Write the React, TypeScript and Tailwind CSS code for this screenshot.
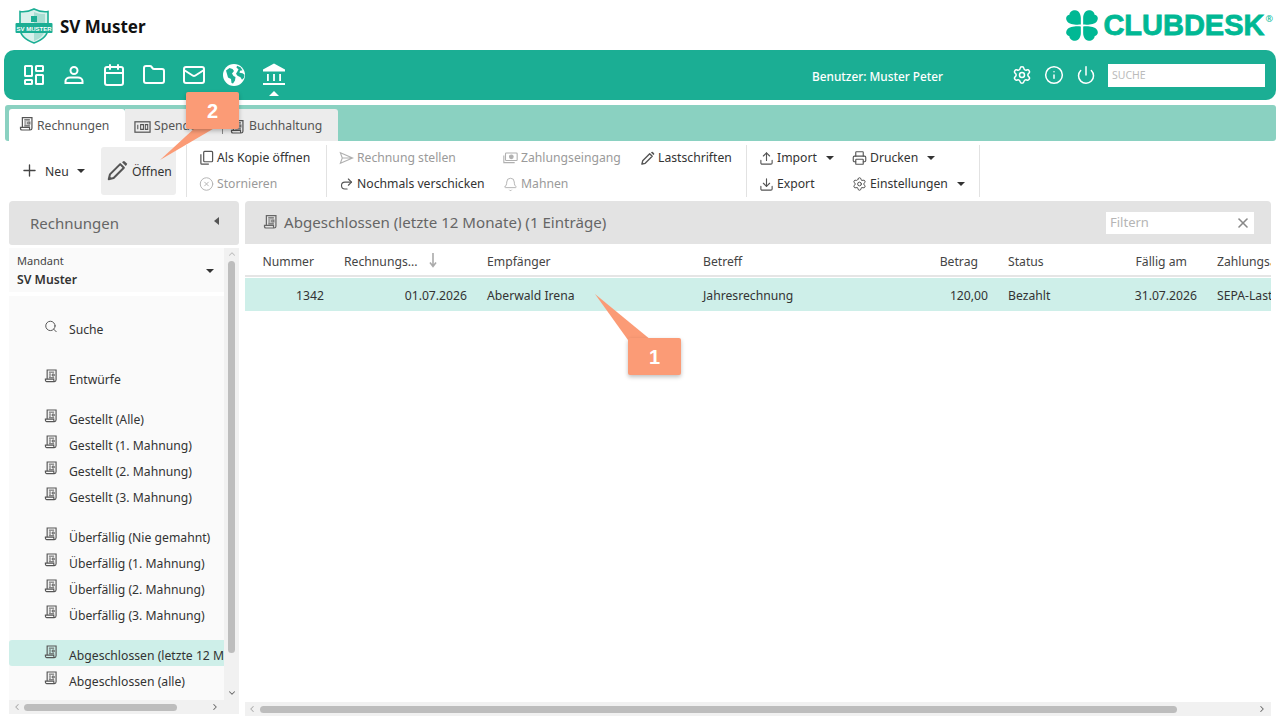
import React from 'react';
import {
  Calendar, Folder, Mail, Settings, Info, Power, Plus, CircleX, Redo2,
  Bell, Upload, Download, Printer, Search, X, ChevronUp, ChevronDown, ChevronLeft, ChevronRight,
} from 'lucide-react';

const InvoiceIcon = ({ className = 'w-4 h-4' }: { className?: string }) => (
  <svg viewBox="0 0 16 16" className={className} fill="none" stroke="currentColor" strokeWidth="1.300">
    <path d="M3.600 11.500V1.200h10.200v11.200a2 2 0 0 1-2 2H3a1.600 1.600 0 0 1-1.400-1.500v-1.400h9.600v1.400a1.500 1.500 0 0 0 1 1.500" />
    <path d="M5.600 3.600h6M5.600 5.800h2.400M9.400 5.800h2.200V8H9.400zM5.600 8h2.400M5.600 10h6" strokeWidth="1.100" />
  </svg>
);

const PencilIcon = ({ className = 'w-5 h-5' }: { className?: string }) => (
  <svg viewBox="0 0 24 24" className={className} fill="none" stroke="currentColor" strokeWidth="2.200" strokeLinejoin="round">
    <path d="M3 21l1.300-5.300L15.500 4.500l4 4L8.300 19.700z" />
    <path d="M17.500 2.500l1-1a1.500 1.500 0 0 1 2 0l2 2a1.500 1.500 0 0 1 0 2l-1 1z" fill="currentColor" stroke="none" />
    <path d="M3 21l.8-3.400 2.600 2.600z" fill="currentColor" stroke="none" />
  </svg>
);

const CopyIcon = () => (
  <svg viewBox="0 0 16 16" className="w-4 h-4" fill="none" stroke="currentColor" strokeWidth="1.300">
    <rect x="5" y="1" width="9.500" height="11" rx="1" />
    <path d="M2 4v9.500a1 1 0 0 0 1 1h7.500" />
  </svg>
);

const DashboardIcon = () => (
  <svg viewBox="0 0 24 24" className="w-6 h-6" fill="none" stroke="currentColor" strokeWidth="2">
    <rect x="3" y="3" width="7" height="10" rx="0.500" />
    <rect x="14" y="3" width="7" height="5" rx="0.500" />
    <rect x="14" y="12" width="7" height="9" rx="0.500" />
    <rect x="3" y="17" width="7" height="4" rx="0.500" />
  </svg>
);

const UserIcon = () => (
  <svg viewBox="0 0 24 24" className="w-6 h-6" fill="none" stroke="currentColor" strokeWidth="2">
    <circle cx="12" cy="7.500" r="3.500" />
    <path d="M8 14.500h8c2.500 0 4.500 1.500 4.500 3.500v2h-17v-2c0-2 2-3.500 4.500-3.500z" />
  </svg>
);

const GlobeIcon = () => (
  <svg viewBox="0 0 24 24" className="w-6 h-6">
    <circle cx="12" cy="12" r="11" fill="white" />
    <path d="M4 7.500l3.500-2.500 3 1 1.500 2-2 2.500 1.500 2.500 2 1-.5 3.500-2 3-1.500-.5-.5-4-3-1.500-1-3.500zM15 2.800l3.500 1.500 2 3-2.500.5-.5 2 3 .5 2 1.500-.5 3-2 2-1.500-2.500-3-1.500-1.500-2 1.500-2.500 1-2-2-1.500z" fill="#1bae94" />
  </svg>
);

const BankIcon = () => (
  <svg viewBox="0 0 24 24" className="w-[24px] h-[24px]" fill="white">
    <path d="M12 0.500 23 6.500V8.500H1V6.500z" />
    <path d="M5 11h1.800v7H5zM11.100 11h1.800v7h-1.800zM17.200 11H19v7h-1.800z" />
    <path d="M1 20h22v2H1z" />
  </svg>
);

const CloverLogo = () => (
  <svg viewBox="0 0 34 32" className="w-[34px] h-[31px]" fill="#00b894">
    {[0, 1, 2, 3].map((i) => (
      <path
        key={i}
        transform={`translate(${i === 1 || i === 3 ? 34 : 0} ${i >= 2 ? 32 : 0}) scale(${i === 1 || i === 3 ? -1 : 1} ${i >= 2 ? -1 : 1})`}
        d="M15.800 15C10 15.400 4 15 1.600 11.500-.4 8.500 1 5.500 4 5c0-2.800 3-5 6-4.800 3.800.3 5.800 4 5.800 8z"
      />
    ))}
  </svg>
);

const ShieldLogo = () => (
  <svg viewBox="0 0 38 36" className="w-[38px] h-[36px]">
    <path d="M19 1C14 3.500 9 4 5 3.500V20c0 8 7 12.500 14 15 7-2.500 14-7 14-15V3.500C29 4 24 3.500 19 1z" fill="#d9f1ec" stroke="#1bae94" strokeWidth="1.600" />
    <path d="M19 4v29c6-2.500 11-6 11-13V6c-4 .2-8-.6-11-2z" fill="#a9ded3" />
    <path d="M16 8h6v6h-6z" fill="#1bae94" />
    <rect x="0.500" y="15" width="37" height="10" rx="1" fill="#1bae94" />
    <text x="19" y="22.500" textAnchor="middle" fontSize="6" fontWeight="700" fill="white" fontFamily="'Liberation Sans', sans-serif">SV MUSTER</text>
  </svg>
);

const SendIcon = () => (
  <svg viewBox="0 0 16 16" className="w-4 h-4" fill="none" stroke="currentColor" strokeWidth="1.200">
    <path d="M1.500 2.500 14.500 8 1.500 13.500 3.500 8zM3.500 8h11" />
  </svg>
);

const CashIcon = () => (
  <svg viewBox="0 0 18 16" className="w-[18px] h-4" fill="none" stroke="currentColor" strokeWidth="1.300">
    <rect x="3" y="2" width="14" height="9" rx="1" />
    <circle cx="10" cy="6.500" r="2.200" fill="currentColor" />
    <path d="M1 5v8.500h13" />
  </svg>
);

const DonationIcon = () => (
  <svg viewBox="0 0 18 14" className="w-[17px] h-[14px]" fill="none" stroke="currentColor" strokeWidth="1.300">
    <rect x="1" y="1.500" width="16" height="11" />
    <path d="M4 4.500v5M7 4.500h3v5H7zM12 4.500h2.500v5H12z" strokeWidth="1.100" />
  </svg>
);

const Caret = ({ className = '' }: { className?: string }) => (
  <span className={`inline-block w-0 h-0 border-l-[4px] border-r-[4px] border-t-[4px] border-l-transparent border-r-transparent border-t-[#333] ${className}`} />
);

const ToolItem = ({ icon, label, off, caret }: { icon: React.ReactNode; label: string; off?: boolean; caret?: boolean }) => (
  <div className={`h-[26px] flex items-center gap-[3px] whitespace-nowrap ${off ? 'text-[#9a9a9a]' : 'text-[#333]'}`}>
    <span className={`w-[15px] flex justify-center shrink-0 ${off ? 'text-[#b0b0b0]' : 'text-[#555]'}`}>{icon}</span>
    <span>{label}</span>
    {caret && <Caret className="ml-[6px]" />}
  </div>
);

const Divider = () => <div className="w-px h-[52px] bg-[#e2e2e2] shrink-0" />;

const SideItem = ({ label, active, mt = '', icon }: { label: string; active?: boolean; mt?: string; icon?: React.ReactNode }) => (
  <div className={`h-[26px] flex items-center pl-[35px] whitespace-nowrap rounded-l-[3px] ${mt} ${active ? 'bg-[#ceefe9]' : ''}`}>
    <span className="w-[14px] mr-[11px] flex justify-center text-[#555] shrink-0 -mt-[2px]">{icon ?? <InvoiceIcon className="w-[15px] h-[16px]" />}</span>
    <span className="text-[#333] mt-[7px]">{label}</span>
  </div>
);

const cols = 'grid grid-cols-[89px_143px_216px_212px_93px_128px_81px_100px]';

export default function App() {
  return (
    <div className="relative w-[1280px] h-[720px] overflow-hidden bg-white font-['Noto_Sans','Open_Sans',sans-serif] text-[12.2px] text-[#333]">
      {/* header */}
      <div className="h-[50px] flex items-center justify-between pl-[15px] pr-[7px]">
        <div className="flex items-center gap-[7px] mt-[2px]">
          <ShieldLogo />
          <span className="text-[17px] font-bold text-[#111] mt-[1px]">SV Muster</span>
        </div>
        <div className="flex items-center gap-[4px] mt-[1px]">
          <CloverLogo />
          <span className="font-['Liberation_Sans',sans-serif] font-bold text-[29px] leading-none text-[#00b894] [-webkit-text-stroke:0.8px_#00b894]">CLUBDESK</span>
          <span className="text-[9px] leading-none text-[#00b894] -ml-[3px] -mt-[14px]">®</span>
        </div>
      </div>

      {/* main nav */}
      <div className="relative mx-[4px] h-[50px] rounded-[10px] bg-[#1bae94] flex items-center text-white">
        <div className="flex items-center gap-[16px] pl-[18px]">
          <DashboardIcon />
          <UserIcon />
          <Calendar className="w-6 h-6" strokeWidth={2} />
          <Folder className="w-6 h-6" strokeWidth={2} />
          <Mail className="w-6 h-6" strokeWidth={2} />
          <GlobeIcon />
          <BankIcon />
        </div>
        <span className="ml-[526px] w-[200px] pt-[3px] text-[11.8px] font-medium">Benutzer: Muster Peter</span>
        <div className="flex items-center gap-[12px]">
          <Settings className="w-5 h-5" strokeWidth={1.8} />
          <Info className="w-5 h-5" strokeWidth={1.8} />
          <Power className="w-5 h-5" strokeWidth={1.8} />
        </div>
        <div className="ml-[12px] w-[157px] h-[23px] bg-white flex items-center pl-[4px] pt-[1px] text-[10.5px] text-[#bbb]">SUCHE</div>
        <span className="absolute left-[265px] bottom-[4px] w-0 h-0 border-l-[5px] border-r-[5px] border-b-[5px] border-l-transparent border-r-transparent border-b-white" />
      </div>

      {/* tabs */}
      <div className="mt-[5px] ml-[5px] mr-[4px] h-[36px] rounded-[3px] bg-[#8ad1c1] flex items-end pl-[4px]">
        <div className="w-[116px] h-[32px] bg-white rounded-t-[3px] flex items-center pl-[10px] pt-[3px] gap-[3px] text-[#555]">
          <InvoiceIcon className="w-[15px] h-[16px] -mt-[6px]" />
          <span>Rechnungen</span>
        </div>
        <div className="w-[213px] h-[32px] bg-[#ececec] rounded-tr-[3px] flex items-center pl-[9px] pt-[3px] text-[#555]">
          <DonationIcon />
          <span className="ml-[3px] w-[68px]">Spenden</span>
          <span className="w-px h-[14px] bg-[#888] mr-[7px]" />
          <InvoiceIcon className="w-[15px] h-[16px]" />
          <span className="ml-[4px]">Buchhaltung</span>
        </div>
      </div>

      {/* toolbar */}
      <div className="h-[60px] flex items-center pl-[20px]">
        <div className="flex items-center w-[81px]">
          <Plus className="w-[19px] h-[19px] text-[#444] shrink-0" strokeWidth={1.7} />
          <span className="ml-[6px] mt-[2px]">Neu</span>
          <Caret className="ml-[8px]" />
        </div>
        <div className="w-[75px] h-[48px] rounded-[3px] bg-[#eeeeee] flex items-center pl-[5px] gap-[4px] shrink-0">
          <PencilIcon className="w-[22px] h-[22px] text-[#555]" />
          <span className="mt-[2px]">Öffnen</span>
        </div>
        <div className="ml-[10px]"><Divider /></div>
        <div className="w-[139px] pl-[12px] shrink-0">
          <ToolItem icon={<CopyIcon />} label="Als Kopie öffnen" />
          <ToolItem off icon={<CircleX className="w-[16px] h-[16px]" strokeWidth={1.5} />} label="Stornieren" />
        </div>
        <Divider />
        <div className="w-[176px] pl-[12px] shrink-0">
          <ToolItem off icon={<SendIcon />} label="Rechnung stellen" />
          <ToolItem icon={<Redo2 className="w-[16px] h-[16px]" strokeWidth={1.8} />} label="Nochmals verschicken" />
        </div>
        <div className="w-[137px] shrink-0">
          <ToolItem off icon={<CashIcon />} label="Zahlungseingang" />
          <ToolItem off icon={<Bell className="w-[15px] h-[15px]" strokeWidth={1.5} />} label="Mahnen" />
        </div>
        <div className="w-[106px] shrink-0">
          <ToolItem icon={<PencilIcon className="w-[15px] h-[15px]" />} label="Lastschriften" />
          <div className="h-[26px]" />
        </div>
        <Divider />
        <div className="w-[105px] pl-[12px] shrink-0">
          <ToolItem icon={<Upload className="w-[15px] h-[15px]" strokeWidth={1.8} />} label="Import" caret />
          <ToolItem icon={<Download className="w-[15px] h-[15px]" strokeWidth={1.8} />} label="Export" />
        </div>
        <div className="w-[127px] shrink-0">
          <ToolItem icon={<Printer className="w-[16px] h-[16px]" strokeWidth={1.8} />} label="Drucken" caret />
          <ToolItem icon={<Settings className="w-[16px] h-[16px]" strokeWidth={1.6} />} label="Einstellungen" caret />
        </div>
        <Divider />
      </div>

      {/* content */}
      <div className="flex pl-[9px] pr-[9px] gap-[6px]">
        {/* left panel */}
        <div className="w-[230px] shrink-0">
          <div className="h-[44px] rounded-t-[4px] rounded-b-[3px] bg-[#e3e3e3] flex items-center justify-between pl-[21px] pr-[20px] pt-[1px] text-[15px] text-[#666]">
            <span>Rechnungen</span>
            <span className="w-0 h-0 border-y-[4px] border-r-[5px] border-y-transparent border-r-[#555] -mt-[6px]" />
          </div>
          <div className="mt-[3px] h-[466px] flex bg-[#f1f1f1]">
            <div className="w-[215px] flex flex-col bg-white">
              <div className="h-[44px] bg-[#fafafa] pl-[8px] pr-[10px] flex items-center justify-between">
                <div className="pt-[4px]">
                  <div className="text-[11px] leading-[14px] text-[#444]">Mandant</div>
                  <div className="text-[12.2px] leading-[23px] font-semibold text-[#333]">SV Muster</div>
                </div>
                <Caret className="mt-[2px]" />
              </div>
              <div className="mt-[4px] h-[404px] bg-[#fafafa] pt-[18px] overflow-hidden">
                <SideItem label="Suche" icon={<Search className="w-[17px] h-[17px]" strokeWidth={1.7} />} />
                <SideItem label="Entwürfe" mt="mt-[24px]" />
                <SideItem label="Gestellt (Alle)" mt="mt-[14px]" />
                <SideItem label="Gestellt (1. Mahnung)" />
                <SideItem label="Gestellt (2. Mahnung)" />
                <SideItem label="Gestellt (3. Mahnung)" />
                <SideItem label="Überfällig (Nie gemahnt)" mt="mt-[14px]" />
                <SideItem label="Überfällig (1. Mahnung)" />
                <SideItem label="Überfällig (2. Mahnung)" />
                <SideItem label="Überfällig (3. Mahnung)" />
                <SideItem label="Abgeschlossen (letzte 12 Monate)" active mt="mt-[14px]" />
                <SideItem label="Abgeschlossen (alle)" />
              </div>
              <div className="h-[14px] flex items-center bg-[#f1f1f1] pl-[3px] pr-[4px] text-[#666]">
                <ChevronLeft className="w-[10px] h-[10px] text-[#aaa]" strokeWidth={2.5} />
                <div className="ml-[2px] w-[153px] h-[7px] rounded-full bg-[#bdbdbd]" />
                <ChevronRight className="ml-auto w-[10px] h-[10px]" strokeWidth={2.5} />
              </div>
            </div>
            <div className="w-[15px] flex flex-col items-center pt-[1px] pb-[16px]">
              <ChevronUp className="w-[10px] h-[10px] text-[#bbb]" strokeWidth={2.5} />
              <div className="mt-[2px] w-[7px] h-[392px] rounded-full bg-[#bdbdbd]" />
              <ChevronDown className="mt-auto w-[10px] h-[10px] text-[#666]" strokeWidth={2.5} />
            </div>
          </div>
        </div>

        {/* right panel */}
        <div className="w-[1026px] shrink-0">
          <div className="h-[43px] rounded-t-[4px] bg-[#e3e3e3] flex items-center justify-between pl-[18px] pr-[16px] text-[#666]">
            <div className="flex items-center gap-[6px] text-[15.1px]">
              <InvoiceIcon className="w-[15px] h-[16px]" />
              <span>Abgeschlossen (letzte 12 Monate) (1 Einträge)</span>
            </div>
            <div className="w-[150px] h-[24px] bg-white border border-[#e3e3e3] flex items-center justify-between pl-[4px] pr-[3px] text-[13px] text-[#b5b5b5]">
              <span>Filtern</span>
              <X className="w-[16px] h-[16px] text-[#888]" strokeWidth={2.4} />
            </div>
          </div>
          <div className="h-[472px] flex flex-col overflow-hidden">
            <div className={`${cols} h-[33px] pt-[6px] items-center border-b-[2px] border-[#e5e5e5] text-[#444] whitespace-nowrap`}>
              <div className="text-right pr-[20px]">Nummer</div>
              <div className="pl-[10px] flex items-center">
                <span>Rechnungs...</span>
                <svg viewBox="0 0 10 16" className="ml-[10px] w-[10px] h-[16px] text-[#aaa] -mt-[4px]" fill="none" stroke="currentColor" strokeWidth="1.600"><path d="M5 1v13M2 10.500 5 14.500 8 10.500" /></svg>
              </div>
              <div className="pl-[10px]">Empfänger</div>
              <div className="pl-[10px]">Betreff</div>
              <div className="text-right pr-[20px]">Betrag</div>
              <div className="pl-[10px]">Status</div>
              <div className="text-right pr-[20px]">Fällig am</div>
              <div className="pl-[10px] overflow-hidden">Zahlungsart</div>
            </div>
            <div className={`${cols} mt-[1px] h-[33px] pt-[4px] items-center bg-[#ceefe9] text-[#333] whitespace-nowrap`}>
              <div className="text-right pr-[10px]">1342</div>
              <div className="text-right pr-[10px]">01.07.2026</div>
              <div className="pl-[10px]">Aberwald Irena</div>
              <div className="pl-[10px]">Jahresrechnung</div>
              <div className="text-right pr-[10px]">120,00</div>
              <div className="pl-[10px]">Bezahlt</div>
              <div className="text-right pr-[10px]">31.07.2026</div>
              <div className="pl-[10px] overflow-hidden">SEPA-Lastschrift</div>
            </div>
            <div className="flex-1" />
            <div className="h-[14px] bg-[#f1f1f1] flex items-center pl-[2px] pr-[4px] text-[#666]">
              <ChevronLeft className="w-[10px] h-[10px] text-[#aaa]" strokeWidth={2.5} />
              <div className="ml-[3px] w-[917px] h-[7px] rounded-full bg-[#bdbdbd]" />
              <ChevronRight className="ml-auto w-[10px] h-[10px]" strokeWidth={2.5} />
            </div>
          </div>
        </div>
      </div>

      {/* callouts */}
      <svg viewBox="0 0 1280 720" className="absolute inset-0 w-[1280px] h-[720px] pointer-events-none">
        <path d="M160 160 197 126 218 126z" fill="#fb9b76" />
        <path d="M595 294 628 340 651 340z" fill="#fb9b76" />
      </svg>
      <div className="absolute left-[186px] top-[92px] w-[53px] h-[37px] rounded-[2px] bg-[#fb9b76] flex items-center justify-center text-white text-[20px] font-bold font-['Liberation_Sans',sans-serif] shadow-[0_2px_4px_rgba(0,0,0,0.25)]">2</div>
      <div className="absolute left-[628px] top-[338px] w-[53px] h-[37px] rounded-[2px] bg-[#fb9b76] flex items-center justify-center text-white text-[20px] font-bold font-['Liberation_Sans',sans-serif] shadow-[0_2px_4px_rgba(0,0,0,0.25)]">1</div>
    </div>
  );
}
